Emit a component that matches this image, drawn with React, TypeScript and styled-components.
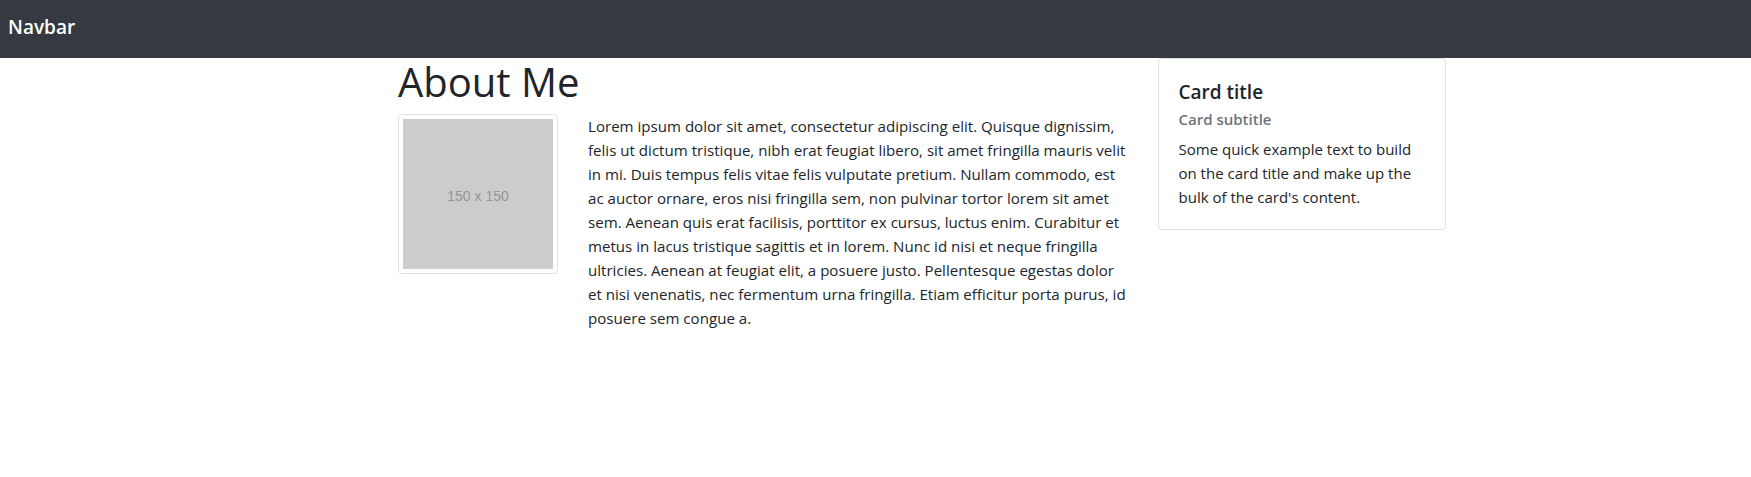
import React from "react";
import styled, { createGlobalStyle } from "styled-components";

const GlobalStyle = createGlobalStyle`
  html, body {
    margin: 0;
    padding: 0;
    background: #ffffff;
  }
  body {
    font-family: "Open Sans", "Noto Sans", sans-serif;
    font-size: 15px;
    line-height: 24px;
    color: #212529;
  }
  *, *::before, *::after {
    box-sizing: border-box;
  }
`;

const Navbar = styled.nav`
  height: 58px;
  background: #343a40;
  display: flex;
  align-items: flex-start;
  padding: 0 8px;
`;

const Brand = styled.a`
  color: #ffffff;
  font-size: 19px;
  font-weight: 600;
  line-height: 30px;
  padding-top: 12px;
  text-decoration: none;
`;

const Container = styled.main`
  max-width: 1140px;
  margin: 0 auto;
  display: flex;
  align-items: flex-start;
  gap: 15px;
`;

const About = styled.section`
  flex: 1;
  min-width: 0;
  margin-left: 92.5px;
`;

const Title = styled.h1`
  margin: 0 0 8px;
  font-size: 40px;
  font-weight: 500;
  line-height: 48px;
`;

const MediaRow = styled.div`
  display: flex;
  align-items: flex-start;
  gap: 30px;
`;

const Thumbnail = styled.div`
  flex-shrink: 0;
  padding: 4px;
  background: #ffffff;
  border: 1px solid #dee2e6;
  border-radius: 4px;
`;

const Placeholder = styled.div`
  width: 150px;
  height: 150px;
  background: #cccccc;
  color: #969696;
  display: flex;
  align-items: center;
  justify-content: center;
  font-family: "Liberation Sans", Arial, sans-serif;
  font-size: 14px;
  padding-top: 3px;
`;

const Text = styled.p`
  flex: 1;
  min-width: 0;
  margin: 0;
  font-size: 15.1px;
`;

const Line = styled.span`
  display: block;
  white-space: nowrap;
`;

const Card = styled.aside`
  flex-shrink: 0;
  width: 288px;
  border: 1px solid rgba(0, 0, 0, 0.125);
  border-radius: 4px;
  background: #ffffff;
`;

const CardBody = styled.div`
  padding: 20px;
`;

const CardTitle = styled.h5`
  margin: 0 0 6px;
  font-size: 19px;
  font-weight: 600;
  line-height: 24px;
  padding-top: 1px;
`;

const CardSubtitle = styled.h6`
  margin: 0 0 8px;
  font-size: 15px;
  font-weight: 600;
  line-height: 19px;
  color: #6c757d;
`;

const CardText = styled.p`
  margin: 0;
`;

const aboutLines = [
  "Lorem ipsum dolor sit amet, consectetur adipiscing elit. Quisque dignissim,",
  "felis ut dictum tristique, nibh erat feugiat libero, sit amet fringilla mauris velit",
  "in mi. Duis tempus felis vitae felis vulputate pretium. Nullam commodo, est",
  "ac auctor ornare, eros nisi fringilla sem, non pulvinar tortor lorem sit amet",
  "sem. Aenean quis erat facilisis, porttitor ex cursus, luctus enim. Curabitur et",
  "metus in lacus tristique sagittis et in lorem. Nunc id nisi et neque fringilla",
  "ultricies. Aenean at feugiat elit, a posuere justo. Pellentesque egestas dolor",
  "et nisi venenatis, nec fermentum urna fringilla. Etiam efficitur porta purus, id",
  "posuere sem congue a.",
];

export default function App() {
  return (
    <>
      <GlobalStyle />
      <Navbar>
        <Brand href="#">Navbar</Brand>
      </Navbar>
      <Container>
        <About>
          <Title>About Me</Title>
          <MediaRow>
            <Thumbnail>
              <Placeholder>150 x 150</Placeholder>
            </Thumbnail>
            <Text>
              {aboutLines.map((line) => (
                <Line key={line}>{line}</Line>
              ))}
            </Text>
          </MediaRow>
        </About>
        <Card>
          <CardBody>
            <CardTitle>Card title</CardTitle>
            <CardSubtitle>Card subtitle</CardSubtitle>
            <CardText>
              Some quick example text to build on the card title and make up the bulk of the card's content.
            </CardText>
          </CardBody>
        </Card>
      </Container>
    </>
  );
}
